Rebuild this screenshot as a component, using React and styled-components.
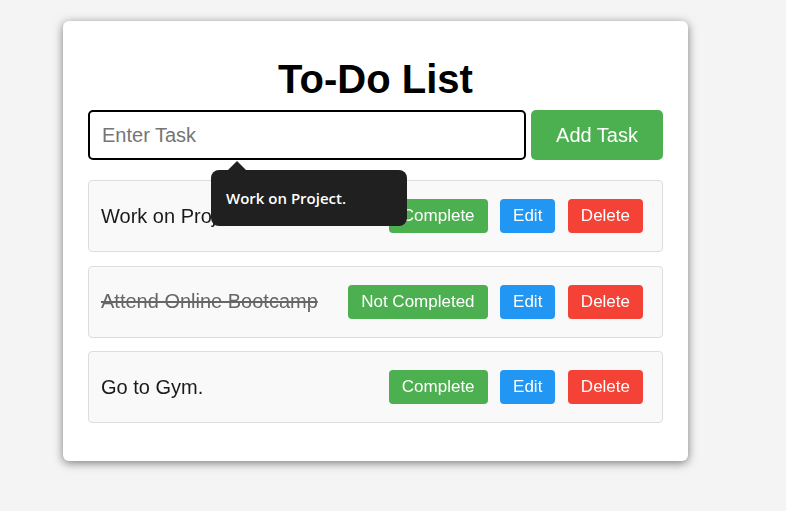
import React from "react";
import styled, { createGlobalStyle } from "styled-components";

const Global = createGlobalStyle`
  html, body { margin: 0; padding: 0; }
  body {
    background: #f4f4f4;
    font-family: "Liberation Sans", Arial, sans-serif;
    min-height: 511px;
  }
`;

const Page = styled.div`
  padding: 21px 0 0 63px;
`;

const Card = styled.div`
  position: relative;
  width: 625px;
  box-sizing: border-box;
  padding: 25px 25px 38px;
  background: #fff;
  border-radius: 6px;
  box-shadow: 0 2px 10px rgba(0, 0, 0, 0.5);
`;

const Title = styled.h1`
  margin: 10px 0 8px;
  font-size: 40px;
  font-weight: bold;
  text-align: center;
  color: #000;
  line-height: 46px;
`;

const Form = styled.div`
  display: flex;
  gap: 5px;
  margin-bottom: 20px;
`;

const Input = styled.input`
  flex: 1;
  height: 50px;
  box-sizing: border-box;
  border: 2px solid #000;
  border-radius: 5px;
  padding: 0 12px;
  font-family: "Liberation Sans", Arial, sans-serif;
  font-size: 20px;
  outline: none;
  color: #000;
  &::placeholder { color: #757575; }
`;

const AddButton = styled.button`
  width: 132px;
  height: 50px;
  border: none;
  border-radius: 5px;
  background: #4caf50;
  color: #fff;
  font-family: "Liberation Sans", Arial, sans-serif;
  font-size: 20px;
  cursor: pointer;
`;

const List = styled.ul`
  list-style: none;
  margin: 0;
  padding: 0;
`;

const Item = styled.li`
  display: flex;
  align-items: center;
  justify-content: space-between;
  box-sizing: border-box;
  height: 72px;
  padding: 0 19px 0 12px;
  background: #f9f9f9;
  border: 1px solid #ddd;
  border-radius: 4px;
  & + & { margin-top: 13.5px; }
`;

const TaskText = styled.span`
  font-size: 20px;
  color: ${(p) => (p.$done ? "#666" : "#1a1a1a")};
  text-decoration: ${(p) => (p.$done ? "line-through" : "none")};
`;

const Actions = styled.div`
  display: flex;
  gap: 12.5px;
`;

const ActionButton = styled.button`
  height: 34px;
  padding: 0 13px;
  border: none;
  border-radius: 4px;
  background: ${(p) => p.$bg};
  color: #fff;
  font-family: "Liberation Sans", Arial, sans-serif;
  font-size: 17px;
  cursor: pointer;
`;

const Tooltip = styled.div`
  position: absolute;
  left: 148px;
  top: 149px;
  width: 196px;
  height: 56px;
  box-sizing: border-box;
  padding: 0 0 0 15px;
  display: flex;
  align-items: center;
  background: #202020;
  border-radius: 8px;
  color: #fff;
  font-family: "Open Sans", "Noto Sans", sans-serif;
  font-weight: 600;
  font-size: 15px;
  &::before {
    content: "";
    position: absolute;
    left: 17px;
    top: -9px;
    border-left: 9px solid transparent;
    border-right: 9px solid transparent;
    border-bottom: 9px solid #202020;
  }
`;

const tasks = [
  { text: "Work on Project.", done: false },
  { text: "Attend Online Bootcamp", done: true },
  { text: "Go to Gym.", done: false },
];

export default function App() {
  return (
    <>
      <Global />
      <Page>
        <Card>
          <Title>To-Do List</Title>
          <Form>
            <Input placeholder="Enter Task" autoFocus />
            <AddButton>Add Task</AddButton>
          </Form>
          <List>
            {tasks.map((t) => (
              <Item key={t.text}>
                <TaskText $done={t.done}>{t.text}</TaskText>
                <Actions>
                  <ActionButton $bg="#4caf50">
                    {t.done ? "Not Completed" : "Complete"}
                  </ActionButton>
                  <ActionButton $bg="#2196f3">Edit</ActionButton>
                  <ActionButton $bg="#f44336">Delete</ActionButton>
                </Actions>
              </Item>
            ))}
          </List>
          <Tooltip>Work on Project.</Tooltip>
        </Card>
      </Page>
    </>
  );
}
